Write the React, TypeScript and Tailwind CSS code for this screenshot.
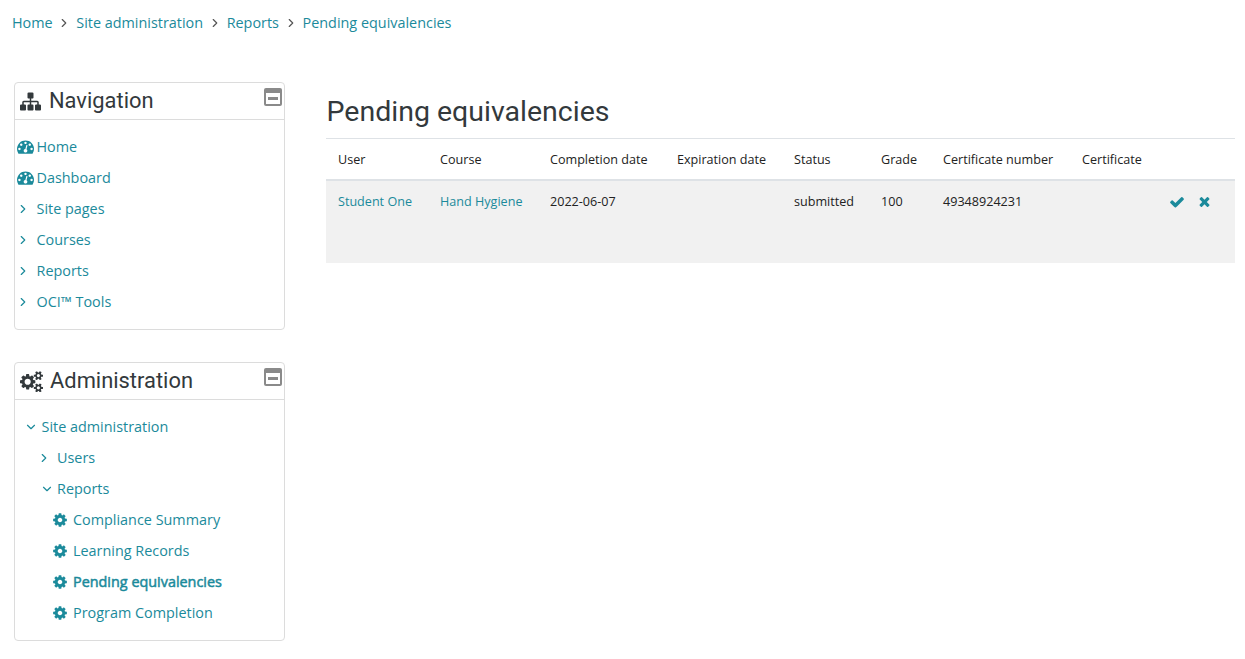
import { LuChevronRight, LuChevronDown } from "react-icons/lu";

const teal = "text-[#1b8a9b]";

const SITEMAP = "M1792 1248v320q0 40-28 68t-68 28h-320q-40 0-68-28t-28-68v-320q0-40 28-68t68-28h96v-192h-512v192h96q40 0 68 28t28 68v320q0 40-28 68t-68 28h-320q-40 0-68-28t-28-68v-320q0-40 28-68t68-28h96v-192h-512v192h96q40 0 68 28t28 68v320q0 40-28 68t-68 28h-320q-40 0-68-28t-28-68v-320q0-40 28-68t68-28h96v-192q0-52 38-90t90-38h512v-192h-96q-40 0-68-28t-28-68v-320q0-40 28-68t68-28h320q40 0 68 28t28 68v320q0 40-28 68t-68 28h-96v192h512q52 0 90 38t38 90v192h96q40 0 68 28t28 68z";
const COGS = "M896 896q0-106-75-181t-181-75-181 75-75 181 75 181 181 75 181-75 75-181zm768 512q0-52-38-90t-90-38-90 38-38 90q0 53 37.5 90.5t90.5 37.5 90.5-37.5 37.5-90.5zm0-1024q0-52-38-90t-90-38-90 38-38 90q0 53 37.5 90.5t90.5 37.5 90.5-37.5 37.5-90.5zm-384 421v185q0 10-7 19.5t-16 10.5l-155 24q-11 35-32 76 34 48 90 115 7 11 7 20 0 12-7 19-23 30-82.5 89.5t-78.5 59.5q-11 0-21-7l-115-90q-37 19-77 31-11 108-23 155-7 24-30 24h-186q-11 0-20-7.5t-10-17.5l-23-153q-34-10-75-31l-118 89q-7 7-20 7-11 0-21-8-144-133-144-160 0-9 7-19 10-14 41-53t47-61q-23-44-35-82l-152-24q-10-1-17-9.5t-7-19.5v-185q0-10 7-19.5t16-10.5l155-24q11-35 32-76-34-48-90-115-7-11-7-20 0-12 7-20 22-30 82-89t79-59q11 0 21 7l115 90q34-18 77-32 11-108 23-154 7-24 30-24h186q11 0 20 7.5t10 17.5l23 153q34 10 75 31l118-89q8-7 20-7 11 0 21 8 144 133 144 160 0 8-7 19-12 16-42 54t-45 60q23 48 34 82l152 23q10 2 17 10.5t7 19.5zm640 533v140q0 16-149 31-12 27-30 52 51 113 51 138 0 4-4 7-122 71-124 71-8 0-46-47t-52-68q-20 2-30 2t-30-2q-14 21-52 68t-46 47q-2 0-124-71-4-3-4-7 0-25 51-138-18-25-30-52-149-15-149-31v-140q0-16 149-31 13-29 30-52-51-113-51-138 0-4 4-7 4-2 35-20t59-34 30-16q8 0 46 46.5t52 67.5q20-2 30-2t30 2q51-71 92-112l6-2q4 0 124 70 4 3 4 7 0 25-51 138 17 23 30 52 149 15 149 31zm0-1024v140q0 16-149 31-12 27-30 52 51 113 51 138 0 4-4 7-122 71-124 71-8 0-46-47t-52-68q-20 2-30 2t-30-2q-14 21-52 68t-46 47q-2 0-124-71-4-3-4-7 0-25 51-138-18-25-30-52-149-15-149-31v-140q0-16 149-31 13-29 30-52-51-113-51-138 0-4 4-7 4-2 35-20t59-34 30-16q8 0 46 46.5t52 67.5q20-2 30-2t30 2q51-71 92-112l6-2q4 0 124 70 4 3 4 7 0 25-51 138 17 23 30 52 149 15 149 31z";
const COG = "M1152 896q0-106-75-181t-181-75-181 75-75 181 75 181 181 75 181-75 75-181zm512-109v222q0 12-8 23t-20 13l-185 28q-19 54-39 91 35 50 107 138 10 12 10 25t-9 23q-27 37-99 108t-94 71q-12 0-26-9l-138-108q-44 23-91 38-16 136-29 186-7 28-36 28h-222q-14 0-24.5-8.5t-11.5-21.5l-28-184q-49-16-90-37l-141 107q-10 9-25 9-14 0-25-11-126-114-165-168-7-10-7-23 0-12 8-23 15-21 51-66.5t54-70.5q-27-50-41-99l-183-27q-13-2-21-12.5t-8-23.5v-222q0-12 8-23t19-13l186-28q14-46 39-92-40-57-107-138-10-12-10-24 0-10 9-23 26-36 98.5-107.5t94.5-71.5q13 0 26 10l138 107q44-23 91-38 16-136 29-186 7-28 36-28h222q14 0 24.5 8.5t11.5 21.5l28 184q49 16 90 37l142-107q9-9 24-9 13 0 25 10 129 119 165 170 7 8 7 22 0 12-8 23-15 21-51 66.5t-54 70.5q26 50 41 98l183 28q13 2 21 12.5t8 23.5z";
const DASH = "M384 1152q0-53-37.5-90.5t-90.5-37.5-90.5 37.5-37.5 90.5 37.5 90.5 90.5 37.5 90.5-37.5 37.5-90.5zm192-448q0-53-37.5-90.5t-90.5-37.5-90.5 37.5-37.5 90.5 37.5 90.5 90.5 37.5 90.5-37.5 37.5-90.5zm428 481l101-382q6-26-7.5-48.5t-38.5-29.5-48 6.5-30 39.5l-101 382q-60 5-107 43.5t-63 98.5q-20 77 20 146t117 89 146-20 89-117q16-60-6-117t-72-91zm660-33q0-53-37.5-90.5t-90.5-37.5-90.5 37.5-37.5 90.5 37.5 90.5 90.5 37.5 90.5-37.5 37.5-90.5zm-640-640q0-53-37.5-90.5t-90.5-37.5-90.5 37.5-37.5 90.5 37.5 90.5 90.5 37.5 90.5-37.5 37.5-90.5zm448 192q0-53-37.5-90.5t-90.5-37.5-90.5 37.5-37.5 90.5 37.5 90.5 90.5 37.5 90.5-37.5 37.5-90.5zm320 448q0 261-141 483-19 29-54 29h-1402q-35 0-54-29-141-221-141-483 0-182 71-348t191-286 286-191 348-71 348 71 286 191 191 286 71 348z";
const CHECK = "M1671 566q0 40-28 68l-724 724-136 136q-28 28-68 28t-68-28l-136-136-362-362q-28-28-28-68t28-68l136-136q28-28 68-28t68 28l294 295 656-657q28-28 68-28t68 28l136 136q28 28 28 68z";
const TIMES = "M1490 1322q0 40-28 68l-136 136q-28 28-68 28t-68-28l-294-294-294 294q-28 28-68 28t-68-28l-136-136q-28-28-28-68t28-68l294-294-294-294q-28-28-28-68t28-68l136-136q28-28 68-28t68 28l294 294 294-294q28-28 68-28t68 28l136 136q28 28 28 68t-28 68l-294 294 294 294q28 28 28 68z";

function Fa({ d, w, h, vw = 1792, className }: { d: string; w: number; h: number; vw?: number; className: string }) {
  return (
    <svg width={w} height={h} viewBox={`0 0 ${vw} 1792`} fill="currentColor" className={`shrink-0 ${className}`}>
      <path d={d} />
    </svg>
  );
}

function Collapse() {
  return (
    <span className="relative block w-[18px] h-[18px] rounded-[2px] bg-[#8a8a8a] mt-[5px]">
      <span className="absolute left-[2px] right-[2px] bottom-[2px] top-[5px] bg-white" />
      <span className="absolute left-[4px] right-[4px] top-[9px] h-[3px] bg-[#8a8a8a]" />
    </span>
  );
}

function Card({ icon, title, children, gap }: { icon: React.ReactNode; title: string; children: React.ReactNode; gap: string }) {
  return (
    <section className="w-[271px] border border-[#dcdcdc] rounded-[4px]">
      <header className="h-[37px] border-b border-[#dcdcdc] flex items-start pl-[5px] pr-[2px]">
        <span className={`flex items-center h-[36px] pt-px ${gap} flex-1 font-['Roboto',sans-serif] text-[21.9px] text-[#33393c]`}>
          {icon}
          {title}
        </span>
        <Collapse />
      </header>
      {children}
    </section>
  );
}

function Row({ pad, icon, label, bold, w }: { pad: string; icon: React.ReactNode; label: string; bold?: boolean; w: string }) {
  return (
    <div className={`h-[31px] flex items-center ${pad} ${teal}`}>
      <span className={`${w} flex items-center shrink-0`}>{icon}</span>
      <span className={bold ? "[-webkit-text-stroke:0.5px_#1b8a9b]" : ""}>{label}</span>
    </div>
  );
}

const right = <LuChevronRight size={14} className="text-[#1b8a9b] -ml-px" strokeWidth={2} />;
const down = <LuChevronDown size={14} className="text-[#1b8a9b]" strokeWidth={2} />;
const dash = <Fa d={DASH} w={17} h={17} className="text-[#1b8a9b]" />;
const cog = <Fa d={COG} w={16} h={16} className="text-[#1b8a9b]" />;
const crumb = <LuChevronRight size={14} className="text-[#555]" />;

const cols: [string, string][] = [
  ["User", "w-[102px]"],
  ["Course", "w-[110px]"],
  ["Completion date", "w-[127px]"],
  ["Expiration date", "w-[117px]"],
  ["Status", "w-[87px]"],
  ["Grade", "w-[62px]"],
  ["Certificate number", "w-[139px]"],
  ["Certificate", "w-[88px]"],
  ["", ""],
];

export default function App() {
  return (
    <div className="w-[1245px] h-[659px] overflow-hidden bg-white font-['Open_Sans',sans-serif] text-[14.4px] text-[#222]">
      <nav className={`h-[45px] pl-[12px] flex items-center gap-[4.8px] ${teal}`}>
        <span>Home</span>
        {crumb}
        <span>Site administration</span>
        {crumb}
        <span>Reports</span>
        {crumb}
        <span>Pending equivalencies</span>
      </nav>
      <div className="flex pt-[37px] pl-[14px] gap-[41px]">
        <aside className="flex flex-col gap-[32px]">
          <Card title="Navigation" gap="gap-[8px]" icon={<Fa d={SITEMAP} w={21} h={21} className="text-[#33393c]" />}>
            <div className="pt-[11px] pb-[12px]">
              <Row pad="pl-[2px]" w="w-[19.5px]" icon={dash} label="Home" />
              <Row pad="pl-[2px]" w="w-[19.5px]" icon={dash} label="Dashboard" />
              <Row pad="pl-[2px]" w="w-[19.5px]" icon={right} label="Site pages" />
              <Row pad="pl-[2px]" w="w-[19.5px]" icon={right} label="Courses" />
              <Row pad="pl-[2px]" w="w-[19.5px]" icon={right} label="Reports" />
              <Row pad="pl-[2px]" w="w-[19.5px]" icon={right} label="OCI™ Tools" />
            </div>
          </Card>
          <Card title="Administration" gap="gap-[7px]" icon={<Fa d={COGS} vw={1920} w={23} h={21.5} className="text-[#33393c]" />}>
            <div className="pt-[11px] pb-[12px]">
              <Row pad="pl-[9px]" w="w-[17.5px]" icon={down} label="Site administration" />
              <Row pad="pl-[23px]" w="w-[19px]" icon={right} label="Users" />
              <Row pad="pl-[25px]" w="w-[17px]" icon={down} label="Reports" />
              <Row pad="pl-[37px]" w="w-[21px]" icon={cog} label="Compliance Summary" />
              <Row pad="pl-[37px]" w="w-[21px]" icon={cog} label="Learning Records" />
              <Row pad="pl-[37px]" w="w-[21px]" icon={cog} label="Pending equivalencies" bold />
              <Row pad="pl-[37px]" w="w-[21px]" icon={cog} label="Program Completion" />
            </div>
          </Card>
        </aside>
        <main className="w-[909px]">
          <h1 className="font-['Roboto',sans-serif] text-[28.5px] text-[#33393c] leading-[34px] pt-[13px] pb-[9px] pl-[0.5px] font-normal">
            Pending equivalencies
          </h1>
          <table className="w-full table-fixed border-t border-[#dee2e6] text-[12.6px] leading-[18px]">
            <thead>
              <tr className="h-[41px] border-b-2 border-[#dee2e6]">
                {cols.map(([c, w]) => (
                  <th key={c} className={`${w} pl-[12px] pt-[3px] text-left font-medium text-[#222] align-middle`}>
                    {c}
                  </th>
                ))}
              </tr>
            </thead>
            <tbody>
              <tr className="h-[83px] bg-[#f1f1f1] align-top">
                <td className={`pl-[12px] pt-[12px] ${teal}`}>Student One</td>
                <td className={`pl-[12px] pt-[12px] ${teal}`}>Hand Hygiene</td>
                <td className="pl-[12px] pt-[12px]">2022-06-07</td>
                <td className="pl-[12px] pt-[12px]"></td>
                <td className="pl-[12px] pt-[12px]">submitted</td>
                <td className="pl-[12px] pt-[12px]">100</td>
                <td className="pl-[12px] pt-[12px]">49348924231</td>
                <td className="pl-[12px] pt-[12px]"></td>
                <td className="pl-[11px] pt-[13px]">
                  <span className="flex items-center gap-[12px]">
                    <Fa d={CHECK} w={16} h={16} className="text-[#1b8a9b]" />
                    <Fa d={TIMES} w={15} h={15} className="text-[#1b8a9b]" />
                  </span>
                </td>
              </tr>
            </tbody>
          </table>
        </main>
      </div>
    </div>
  );
}
